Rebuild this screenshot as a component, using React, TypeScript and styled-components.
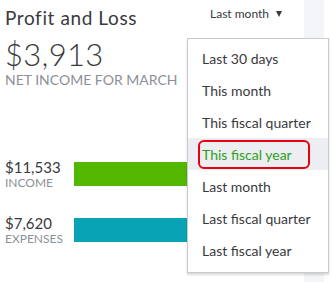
import React from "react";
import styled, { createGlobalStyle } from "styled-components";

const GlobalStyle = createGlobalStyle`
  body {
    margin: 0;
    background: #ffffff;
    font-family: Lato, "Open Sans", Arial, sans-serif;
    color: #393a3d;
  }
`;

const Page = styled.div`
  position: relative;
  display: flex;
  width: 332px;
  height: 282px;
  overflow: hidden;
`;

const Widget = styled.div`
  width: 304px;
  padding: 6px 0 0 5px;
  box-sizing: border-box;
`;

const Gutter = styled.div`
  width: 20px;
  background: #f4f5f8;
`;

const HeaderRow = styled.div`
  display: flex;
  justify-content: space-between;
  align-items: flex-start;
`;

const Title = styled.div`
  font-size: 19px;
  line-height: 24px;
  letter-spacing: 0.6px;
`;

const PeriodButton = styled.div`
  display: flex;
  align-items: center;
  gap: 7px;
  font-size: 12px;
  line-height: 14px;
  margin: 1px 22px 0 0;
`;

const Caret = styled.span`
  width: 0;
  height: 0;
  border-left: 3.5px solid transparent;
  border-right: 3.5px solid transparent;
  border-top: 6px solid #393a3d;
`;

const Amount = styled.div`
  font-size: 31px;
  font-weight: 300;
  line-height: 36px;
  margin-top: 6px;
  letter-spacing: 0.3px;
`;

const Caption = styled.div<{ $size: number }>`
  font-size: ${(p) => p.$size}px;
  line-height: ${(p) => p.$size + 2}px;
  color: #8d9096;
  text-transform: uppercase;
`;

const Bars = styled.div`
  display: flex;
  flex-direction: column;
  gap: 24px;
  margin-top: 70px;
`;

const BarRow = styled.div`
  display: flex;
  align-items: flex-start;
`;

const BarLabel = styled.div`
  width: 69px;
`;

const BarValue = styled.div`
  font-size: 15px;
  line-height: 18px;
`;

const Bar = styled.div<{ $color: string }>`
  height: 24px;
  flex: 1;
  margin-top: 4px;
  background: ${(p) => p.$color};
`;

const Menu = styled.ul`
  position: absolute;
  left: 187px;
  top: 38px;
  width: 142px;
  margin: 0;
  padding: 3px 0 6px;
  list-style: none;
  background: #ffffff;
  border: 1px solid #c9cacc;
  box-sizing: border-box;
  box-shadow: 0 2px 2px rgba(0, 0, 0, 0.15);
`;

const MenuItem = styled.li<{ $active?: boolean }>`
  display: flex;
  align-items: center;
  height: 32px;
  padding-left: 14px;
  font-size: 14px;
  white-space: nowrap;
  background: ${(p) => (p.$active ? "#eceef1" : "transparent")};
  color: ${(p) => (p.$active ? "#2ca01c" : "#393a3d")};
`;

const Highlight = styled.span`
  display: flex;
  align-items: center;
  width: 112px;
  height: 29px;
  margin-left: -4px;
  padding-left: 2px;
  box-sizing: border-box;
  border: 2px solid #e60012;
  border-radius: 6px;
`;

const options = [
  "Last 30 days",
  "This month",
  "This fiscal quarter",
  "This fiscal year",
  "Last month",
  "Last fiscal quarter",
  "Last fiscal year",
];

export default function App() {
  return (
    <Page>
      <GlobalStyle />
      <Widget>
        <HeaderRow>
          <Title>Profit and Loss</Title>
          <PeriodButton>
            Last month <Caret />
          </PeriodButton>
        </HeaderRow>
        <Amount>$3,913</Amount>
        <Caption $size={14}>Net income for March</Caption>
        <Bars>
          <BarRow>
            <BarLabel>
              <BarValue>$11,533</BarValue>
              <Caption $size={12}>Income</Caption>
            </BarLabel>
            <Bar $color="#53b700" />
          </BarRow>
          <BarRow>
            <BarLabel>
              <BarValue>$7,620</BarValue>
              <Caption $size={12}>Expenses</Caption>
            </BarLabel>
            <Bar $color="#08a4b6" />
          </BarRow>
        </Bars>
      </Widget>
      <Gutter />
      <Menu>
        {options.map((o) =>
          o === "This fiscal year" ? (
            <MenuItem key={o} $active>
              <Highlight>{o}</Highlight>
            </MenuItem>
          ) : (
            <MenuItem key={o}>{o}</MenuItem>
          )
        )}
      </Menu>
    </Page>
  );
}
